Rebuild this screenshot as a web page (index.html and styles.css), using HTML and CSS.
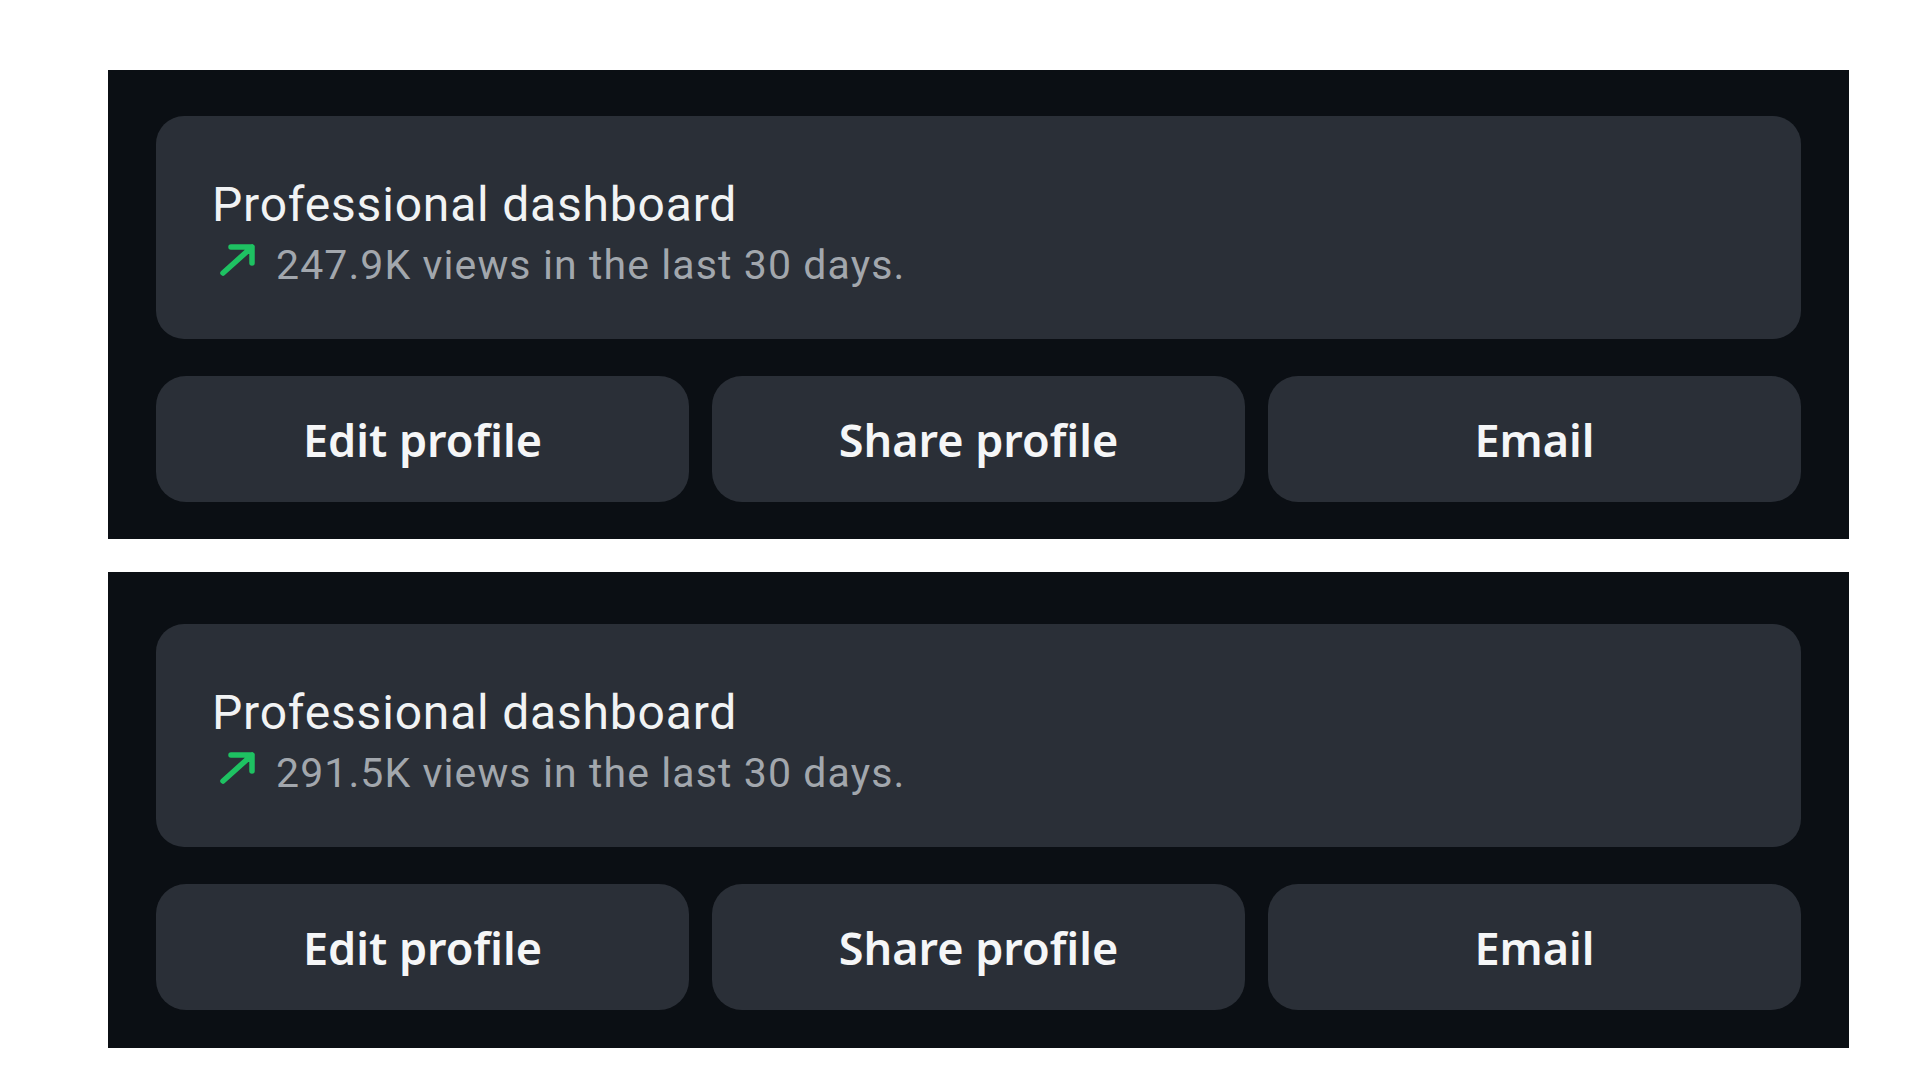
FILE: index.html
```html
<!DOCTYPE html>
<html>
	<head>
		<title>Profile actions</title>
		<link rel="stylesheet" href="styles.css">
	</head>
	<body>
		<div class="page">
			<!-- first capture -->
			<section class="profilePanel firstPanel">
				<div class="dashCard">
					<div class="dashTitle">Professional dashboard</div>
					<div class="dashStats">
						<svg class="trendIcon" width="46" height="44" viewBox="0 0 46 44"><path d="M11 30 L40 4 M19 4 H40 V20" /></svg>
						<span>247.9K views in the last 30 days.</span>
					</div>
				</div>
				<div class="actionRow">
					<button class="actionButton">Edit profile</button>
					<button class="actionButton">Share profile</button>
					<button class="actionButton">Email</button>
				</div>
			</section>

			<!-- second capture -->
			<section class="profilePanel secondPanel">
				<div class="dashCard">
					<div class="dashTitle">Professional dashboard</div>
					<div class="dashStats">
						<svg class="trendIcon" width="46" height="44" viewBox="0 0 46 44"><path d="M11 30 L40 4 M19 4 H40 V20" /></svg>
						<span>291.5K views in the last 30 days.</span>
					</div>
				</div>
				<div class="actionRow">
					<button class="actionButton">Edit profile</button>
					<button class="actionButton">Share profile</button>
					<button class="actionButton">Email</button>
				</div>
			</section>
		</div>
	</body>
</html>
```

FILE: styles.css
```css
body
{
	margin:0;
	background:#ffffff;
	font-family:Roboto, "Noto Sans", sans-serif;
}

.page
{
	padding:70px 0 0 108px;
	display:flex;
	flex-direction:column;
	gap:33px;
}

.profilePanel
{
	width:1741px;
	box-sizing:border-box;
	background:#0b0f14;
	display:flex;
	flex-direction:column;
	gap:37px;
}
.firstPanel
{
	padding:46px 48px 37px 48px;
}
.secondPanel
{
	padding:52px 48px 38px 48px;
}

.dashCard
{
	height:223px;
	box-sizing:border-box;
	padding:61px 56px 0 56px;
	background:#2a2f37;
	border-radius:28px;
}
.dashTitle
{
	font-size:48px;
	line-height:56px;
	letter-spacing:0.8px;
	color:#f1f3f4;
}
.dashStats
{
	margin-top:6px;
	display:flex;
	align-items:center;
	height:52px;
	font-size:41px;
	letter-spacing:1.1px;
	color:#a2a7ad;
}
.trendIcon
{
	flex:none;
	margin-right:18px;
	overflow:visible;
}
.trendIcon path
{
	fill:none;
	stroke:#1ec262;
	stroke-width:5.5;
	stroke-linecap:round;
	stroke-linejoin:round;
}

.actionRow
{
	display:grid;
	grid-template-columns:1fr 1fr 1fr;
	gap:23px;
}
.actionButton
{
	height:126px;
	border:none;
	border-radius:30px;
	background:#2a2f37;
	color:#f5f6f7;
	font:600 45px "Noto Sans", sans-serif;
	padding:0;
}
```
